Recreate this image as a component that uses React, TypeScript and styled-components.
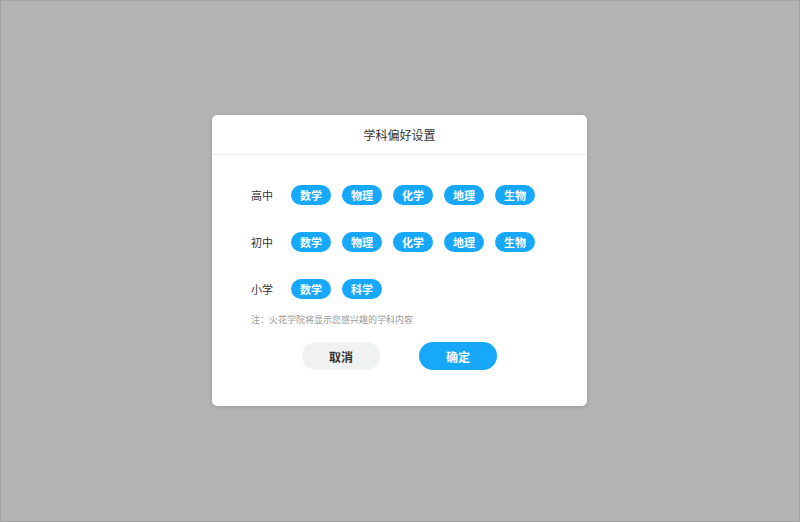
import React from "react";
import styled, { createGlobalStyle } from "styled-components";

const GlobalStyle = createGlobalStyle`
  html, body {
    margin: 0;
    padding: 0;
  }
  body {
    font-family: "Noto Sans CJK SC", "Noto Sans", sans-serif;
  }
`;

const Overlay = styled.div`
  box-sizing: border-box;
  width: 100vw;
  height: 100vh;
  padding: 0 1px 1px 0;
  background: #b3b3b3;
  border: 1px solid #a2a2a2;
  display: flex;
  align-items: center;
  justify-content: center;
`;

const Modal = styled.div`
  width: 375px;
  background: #fff;
  border-radius: 5px;
  box-shadow: 0 1px 4px rgba(0, 0, 0, 0.15);
  display: flex;
  flex-direction: column;
`;

const Header = styled.div`
  height: 38px;
  padding-bottom: 1px;
  border-bottom: 1px solid #ececec;
  display: flex;
  align-items: center;
  justify-content: center;
  font-size: 12px;
  color: #333;
`;

const Body = styled.div`
  padding: 30px 39px 36px;
  display: flex;
  flex-direction: column;
`;

const Rows = styled.div`
  display: flex;
  flex-direction: column;
  gap: 27px;
`;

const Row = styled.div`
  display: flex;
  align-items: center;
  height: 20px;
`;

const Label = styled.div`
  width: 40px;
  font-size: 11px;
  color: #333;
`;

const Chips = styled.div`
  display: flex;
  gap: 11px;
`;

const Chip = styled.div`
  width: 40px;
  height: 20px;
  border-radius: 10px;
  background: #17a8fb;
  color: #fff;
  font-size: 11px;
  font-weight: bold;
  display: flex;
  align-items: center;
  justify-content: center;
`;

const Note = styled.div`
  margin-top: 15px;
  font-size: 9px;
  line-height: 12px;
  color: #999;
`;

const Actions = styled.div`
  margin-top: 16px;
  display: flex;
  justify-content: center;
  gap: 39px;
`;

const Button = styled.button<{ $primary?: boolean }>`
  width: 78px;
  height: 28px;
  border: none;
  border-radius: 14px;
  padding: 0;
  font-family: inherit;
  font-size: 12px;
  font-weight: bold;
  background: ${({ $primary }) => ($primary ? "#17a8fb" : "#f0f1f1")};
  color: ${({ $primary }) => ($primary ? "#fff" : "#333")};
`;

const groups = [
  { label: "高中", subjects: ["数学", "物理", "化学", "地理", "生物"] },
  { label: "初中", subjects: ["数学", "物理", "化学", "地理", "生物"] },
  { label: "小学", subjects: ["数学", "科学"] },
];

export default function App() {
  return (
    <>
      <GlobalStyle />
      <Overlay>
        <Modal>
          <Header>学科偏好设置</Header>
          <Body>
            <Rows>
              {groups.map((g) => (
                <Row key={g.label}>
                  <Label>{g.label}</Label>
                  <Chips>
                    {g.subjects.map((s) => (
                      <Chip key={s}>{s}</Chip>
                    ))}
                  </Chips>
                </Row>
              ))}
            </Rows>
            <Note>注：火花学院将显示您感兴趣的学科内容</Note>
            <Actions>
              <Button>取消</Button>
              <Button $primary>确定</Button>
            </Actions>
          </Body>
        </Modal>
      </Overlay>
    </>
  );
}
